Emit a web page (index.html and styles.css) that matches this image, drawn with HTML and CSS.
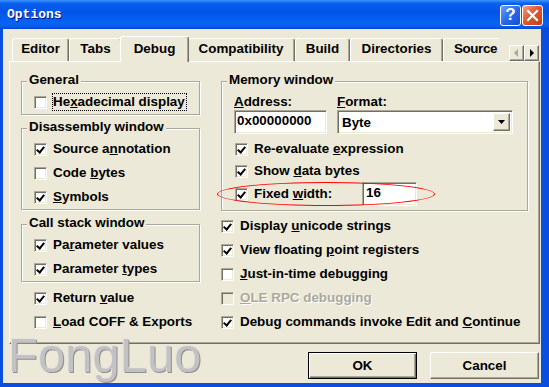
FILE: index.html
```html
<!DOCTYPE html>
<html lang="en">
<head>
    <meta charset="UTF-8">
    <meta name="viewport" content="width=device-width, initial-scale=1.0">
    <title>Options</title>
    <link rel="stylesheet" href="styles.css">
</head>
<body>
<div class="window">
    <div class="titlebar">
        <span class="title">Options</span>
        <div class="caption-buttons">
            <span class="cap-btn help">?</span>
            <span class="cap-btn close">
                <svg width="13" height="13" viewBox="0 0 13 13"><path d="M2 2L11 11M11 2L2 11" stroke="#fff" stroke-width="2.2" stroke-linecap="square"/></svg>
            </span>
        </div>
    </div>

    <div class="client">
        <div class="tabstrip">
            <div class="tabs">
                <span class="tab tab-editor">Editor</span>
                <span class="tab tab-tabs">Tabs</span>
                <span class="tab active">Debug</span>
                <span class="tab tab-compat">Compatibility</span>
                <span class="tab tab-build">Build</span>
                <span class="tab tab-dirs">Directories</span>
                <span class="tab tab-source">Source</span>
            </div>
            <div class="tab-scroll">
                <span class="scroll-btn off"><svg width="5" height="8" viewBox="0 0 5 8"><path d="M4 0V8L0 4Z"/></svg></span>
                <span class="scroll-btn"><svg width="5" height="8" viewBox="0 0 5 8"><path d="M1 0V8L5 4Z"/></svg></span>
            </div>
        </div>

        <div class="panel">
            <div class="col col-left">
                <div class="group group-general">
                    <div class="group-title">General</div>
                    <div class="check"><span class="box"></span><span class="text focus">He<u>x</u>adecimal display</span></div>
                </div>
                <div class="group group-disasm">
                    <div class="group-title">Disassembly window</div>
                    <div class="check"><span class="box on"></span><span class="text">Source a<u>n</u>notation</span></div>
                    <div class="check"><span class="box"></span><span class="text">Code <u>b</u>ytes</span></div>
                    <div class="check"><span class="box on"></span><span class="text"><u>S</u>ymbols</span></div>
                </div>
                <div class="group group-stack">
                    <div class="group-title">Call stack window</div>
                    <div class="check"><span class="box on"></span><span class="text">Pa<u>r</u>ameter values</span></div>
                    <div class="check"><span class="box on"></span><span class="text">Parameter <u>t</u>ypes</span></div>
                </div>
                <div class="plain-list">
                    <div class="check"><span class="box on"></span><span class="text">Return <u>v</u>alue</span></div>
                    <div class="check"><span class="box"></span><span class="text"><u>L</u>oad COFF &amp; Exports</span></div>
                </div>
            </div>

            <div class="col col-right">
                <div class="group mem">
                    <div class="group-title">Memory window</div>
                    <div class="fields">
                        <div class="field field-address">
                            <div class="field-label"><u>A</u>ddress:</div>
                            <div class="edit">0x00000000</div>
                        </div>
                        <div class="field field-format">
                            <div class="field-label"><u>F</u>ormat:</div>
                            <div class="combo">
                                <span class="combo-text">Byte</span>
                                <span class="combo-btn"><svg width="7" height="4" viewBox="0 0 7 4"><path d="M0 0H7L3.5 4Z"/></svg></span>
                            </div>
                        </div>
                    </div>
                    <div class="mem-rows">
                        <div class="check"><span class="box on"></span><span class="text">Re-evaluate <u>e</u>xpression</span></div>
                        <div class="check"><span class="box on"></span><span class="text">Show <u>d</u>ata bytes</span></div>
                        <div class="check fixed-row"><span class="box on"></span><span class="text fixed-label">Fixed <u>w</u>idth:</span><span class="edit edit-width">16</span></div>
                    </div>
                </div>
                <div class="list">
                    <div class="check"><span class="box on"></span><span class="text">Display <u>u</u>nicode strings</span></div>
                    <div class="check"><span class="box on"></span><span class="text">View floating <u>p</u>oint registers</span></div>
                    <div class="check"><span class="box"></span><span class="text"><u>J</u>ust-in-time debugging</span></div>
                    <div class="check disabled"><span class="box"></span><span class="text"><u>O</u>LE RPC debugging</span></div>
                    <div class="check"><span class="box on"></span><span class="text">Debug commands invoke Edit and <u>C</u>ontinue</span></div>
                </div>
            </div>
        </div>

        <div class="buttons">
            <button class="btn default">OK</button>
            <button class="btn">Cancel</button>
        </div>
    </div>

    <div class="mark"></div>
    <div class="watermark">FongLuo</div>
</div>
</body>
</html>
```

FILE: styles.css
```css
* {
    box-sizing: border-box;
}
body {
    margin: 0;
    font-family: "Liberation Sans", Arial, sans-serif;
    font-size: 13.4px;
    font-weight: bold;
    color: #000;
}

.window {
    position: relative;
    width: 549px;
    height: 387px;
    display: flex;
    flex-direction: column;
    background: #0b4ddf;
}

/* title bar */
.titlebar {
    height: 29px;
    flex: none;
    display: flex;
    align-items: center;
    justify-content: space-between;
    padding: 0 6px 0 7px;
    background: linear-gradient(#3d95ff 0%, #0a5fef 12%, #0054e8 40%, #0863f4 80%, #0a5ce8 92%, #0045d4 100%);
}
.title {
    font-family: "Liberation Mono", monospace;
    font-size: 13px;
    color: #fff;
    text-shadow: 1px 1px #0a1883;
}
.caption-buttons {
    display: flex;
    gap: 1px;
    margin-top: 1px;
}
.cap-btn {
    width: 21px;
    height: 21px;
    border: 1px solid #fff;
    border-radius: 3px;
    display: flex;
    align-items: center;
    justify-content: center;
}
.help {
    background: linear-gradient(135deg, #6a9dfc, #2465ea 55%, #1b50cf);
    color: #fff;
    font-size: 17px;
}
.close {
    background: linear-gradient(135deg, #f3a085, #e2582e 45%, #c63c15);
}

/* client area */
.client {
    flex: 1;
    margin: 0 8px 4px 3px;
    background: #ece9d8;
    display: flex;
    flex-direction: column;
}

.tabstrip {
    display: flex;
    height: 26px;
    margin: 7px 0 -1px 6px;
    position: relative;
    z-index: 1;
}
.tabs {
    display: flex;
    align-items: flex-start;
    width: 490px;
    height: 26px;
    padding-left: 3px;
    overflow: hidden;
}
.tab {
    flex: none;
    height: 23px;
    margin-top: 2px;
    padding-top: 2px;
    line-height: 16px;
    text-align: center;
    white-space: nowrap;
    border-top: 1px solid #fff;
    border-left: 1px solid #fff;
    border-right: 1px solid #716f64;
    border-radius: 3px 3px 0 0;
    box-shadow: inset -1px 0 #aca899;
}
.tab-editor {
    width: 57px;
}
.tab-tabs {
    width: 53px;
}
.tab-compat {
    width: 108px;
}
.tab-build {
    width: 55px;
}
.tab-dirs {
    width: 93px;
}
.tab-source {
    width: 64px;
    text-align: left;
    padding-left: 10px;
    letter-spacing: -0.4px;
}
.tab.active {
    width: 69px;
    height: 26px;
    margin: 0 -2px;
    padding-top: 4px;
    background: #ece9d8;
    position: relative;
    z-index: 1;
}
.tab-scroll {
    display: flex;
    margin: 9px 0 0 10px;
}
.scroll-btn {
    width: 15px;
    height: 16px;
    display: flex;
    align-items: center;
    justify-content: center;
    border: 1px solid;
    border-color: #fff #716f64 #716f64 #fff;
    box-shadow: inset -1px -1px #aca899;
}
.scroll-btn svg {
    fill: #000;
}
.scroll-btn.off svg {
    fill: #aca899;
}

.panel {
    height: 283px;
    margin: 0 1px 0 6px;
    border: 1px solid;
    border-color: #fff #716f64 #716f64 #fff;
    box-shadow: inset -1px -1px #aca899;
    padding: 19px 0 0 11px;
    display: flex;
    gap: 21px;
}
.col {
    display: flex;
    flex-direction: column;
}
.col-left {
    width: 179px;
}
.col-right {
    width: 307px;
}

/* group boxes */
.group {
    display: flex;
    flex-direction: column;
    border: 1px solid #aca899;
    box-shadow: inset 1px 1px #fff, 1px 1px #fff;
}
.group-title {
    align-self: flex-start;
    margin: -10px 0 2px 5px;
    padding: 0 2px;
    line-height: 16px;
    background: #ece9d8;
}
.group-general {
    margin-bottom: 13px;
}
.group-disasm {
    margin-bottom: 14px;
}
.group .check {
    padding-left: 12px;
}
.plain-list {
    margin-top: 4px;
}
.plain-list .check {
    padding-left: 13px;
}

/* checkboxes */
.check {
    display: flex;
    align-items: center;
    height: 24px;
    line-height: 16px;
    white-space: nowrap;
}
.box {
    flex: none;
    position: relative;
    width: 13px;
    height: 13px;
    margin-right: 6px;
    background: #fff;
    border: 1px solid;
    border-color: #aca899 #fff #fff #aca899;
    box-shadow: inset 1px 1px #716f64, inset -1px -1px #ece9d8;
}
.box.on::after {
    content: "";
    position: absolute;
    left: 3px;
    top: 1px;
    width: 3px;
    height: 6px;
    border: solid #000;
    border-width: 0 2px 2px 0;
    transform: rotate(40deg);
}
.text.focus {
    margin-left: -1px;
    padding: 0 1px 0 0;
    border: 1px dotted #000;
}
.disabled .box {
    background: #ece9d8;
}
.disabled .text {
    color: #aca899;
    text-shadow: 1px 1px #fff;
}

/* memory window */
.mem {
    padding-bottom: 4px;
}
.fields {
    display: flex;
    gap: 10px;
    margin-top: 4px;
    padding-left: 12px;
}
.field-label {
    line-height: 16px;
}
.field-address {
    width: 93px;
}
.field-format {
    width: 176px;
}
.edit {
    height: 24px;
    padding-left: 2px;
    line-height: 20px;
    background: #fff;
    border: 1px solid;
    border-color: #aca899 #fff #fff #aca899;
    box-shadow: inset 1px 1px #716f64, inset -1px -1px #ece9d8;
}
.combo {
    display: flex;
    height: 24px;
    padding: 2px;
    background: #fff;
    border: 1px solid;
    border-color: #aca899 #fff #fff #aca899;
    box-shadow: inset 1px 1px #716f64, inset -1px -1px #ece9d8;
}
.combo-text {
    flex: 1;
    padding-left: 2px;
    line-height: 19px;
}
.combo-btn {
    width: 17px;
    display: flex;
    align-items: center;
    justify-content: center;
    background: #ece9d8;
    border: 1px solid;
    border-color: #fff #716f64 #716f64 #fff;
    box-shadow: inset -1px -1px #aca899;
}
.mem-rows {
    margin-top: 4px;
}
.mem .check {
    padding-left: 13px;
    height: 22px;
}
.mem .fixed-row {
    height: 24px;
}
.fixed-label {
    width: 108px;
}
.edit-width {
    width: 55px;
    padding-left: 3px;
}

.list {
    margin-top: 3px;
}

/* dialog buttons */
.buttons {
    display: flex;
    justify-content: flex-end;
    gap: 13px;
    margin: 8px 2px 0 0;
}
.btn {
    width: 109px;
    height: 27px;
    font: inherit;
    color: #000;
    background: #ece9d8;
    border: 1px solid;
    border-color: #fff #716f64 #716f64 #fff;
    box-shadow: inset -1px -1px #aca899;
}
.btn.default {
    border-color: #000;
    box-shadow: inset 1px 1px #fff, inset -1px -1px #716f64, inset -2px -2px #aca899;
}

/* overlays */
.mark {
    position: absolute;
    left: 217px;
    top: 182px;
    width: 218px;
    height: 24px;
    border: 1px solid #f00;
    border-radius: 50%;
    z-index: 2;
}
.watermark {
    position: absolute;
    left: 8px;
    top: 337px;
    font-size: 49px;
    line-height: 36px;
    font-weight: normal;
    color: #c2c2c2;
    text-shadow: -1px -1px 0 #e4e4e4, 1px 1px 0 #8e8e8e;
    z-index: 2;
}
```
